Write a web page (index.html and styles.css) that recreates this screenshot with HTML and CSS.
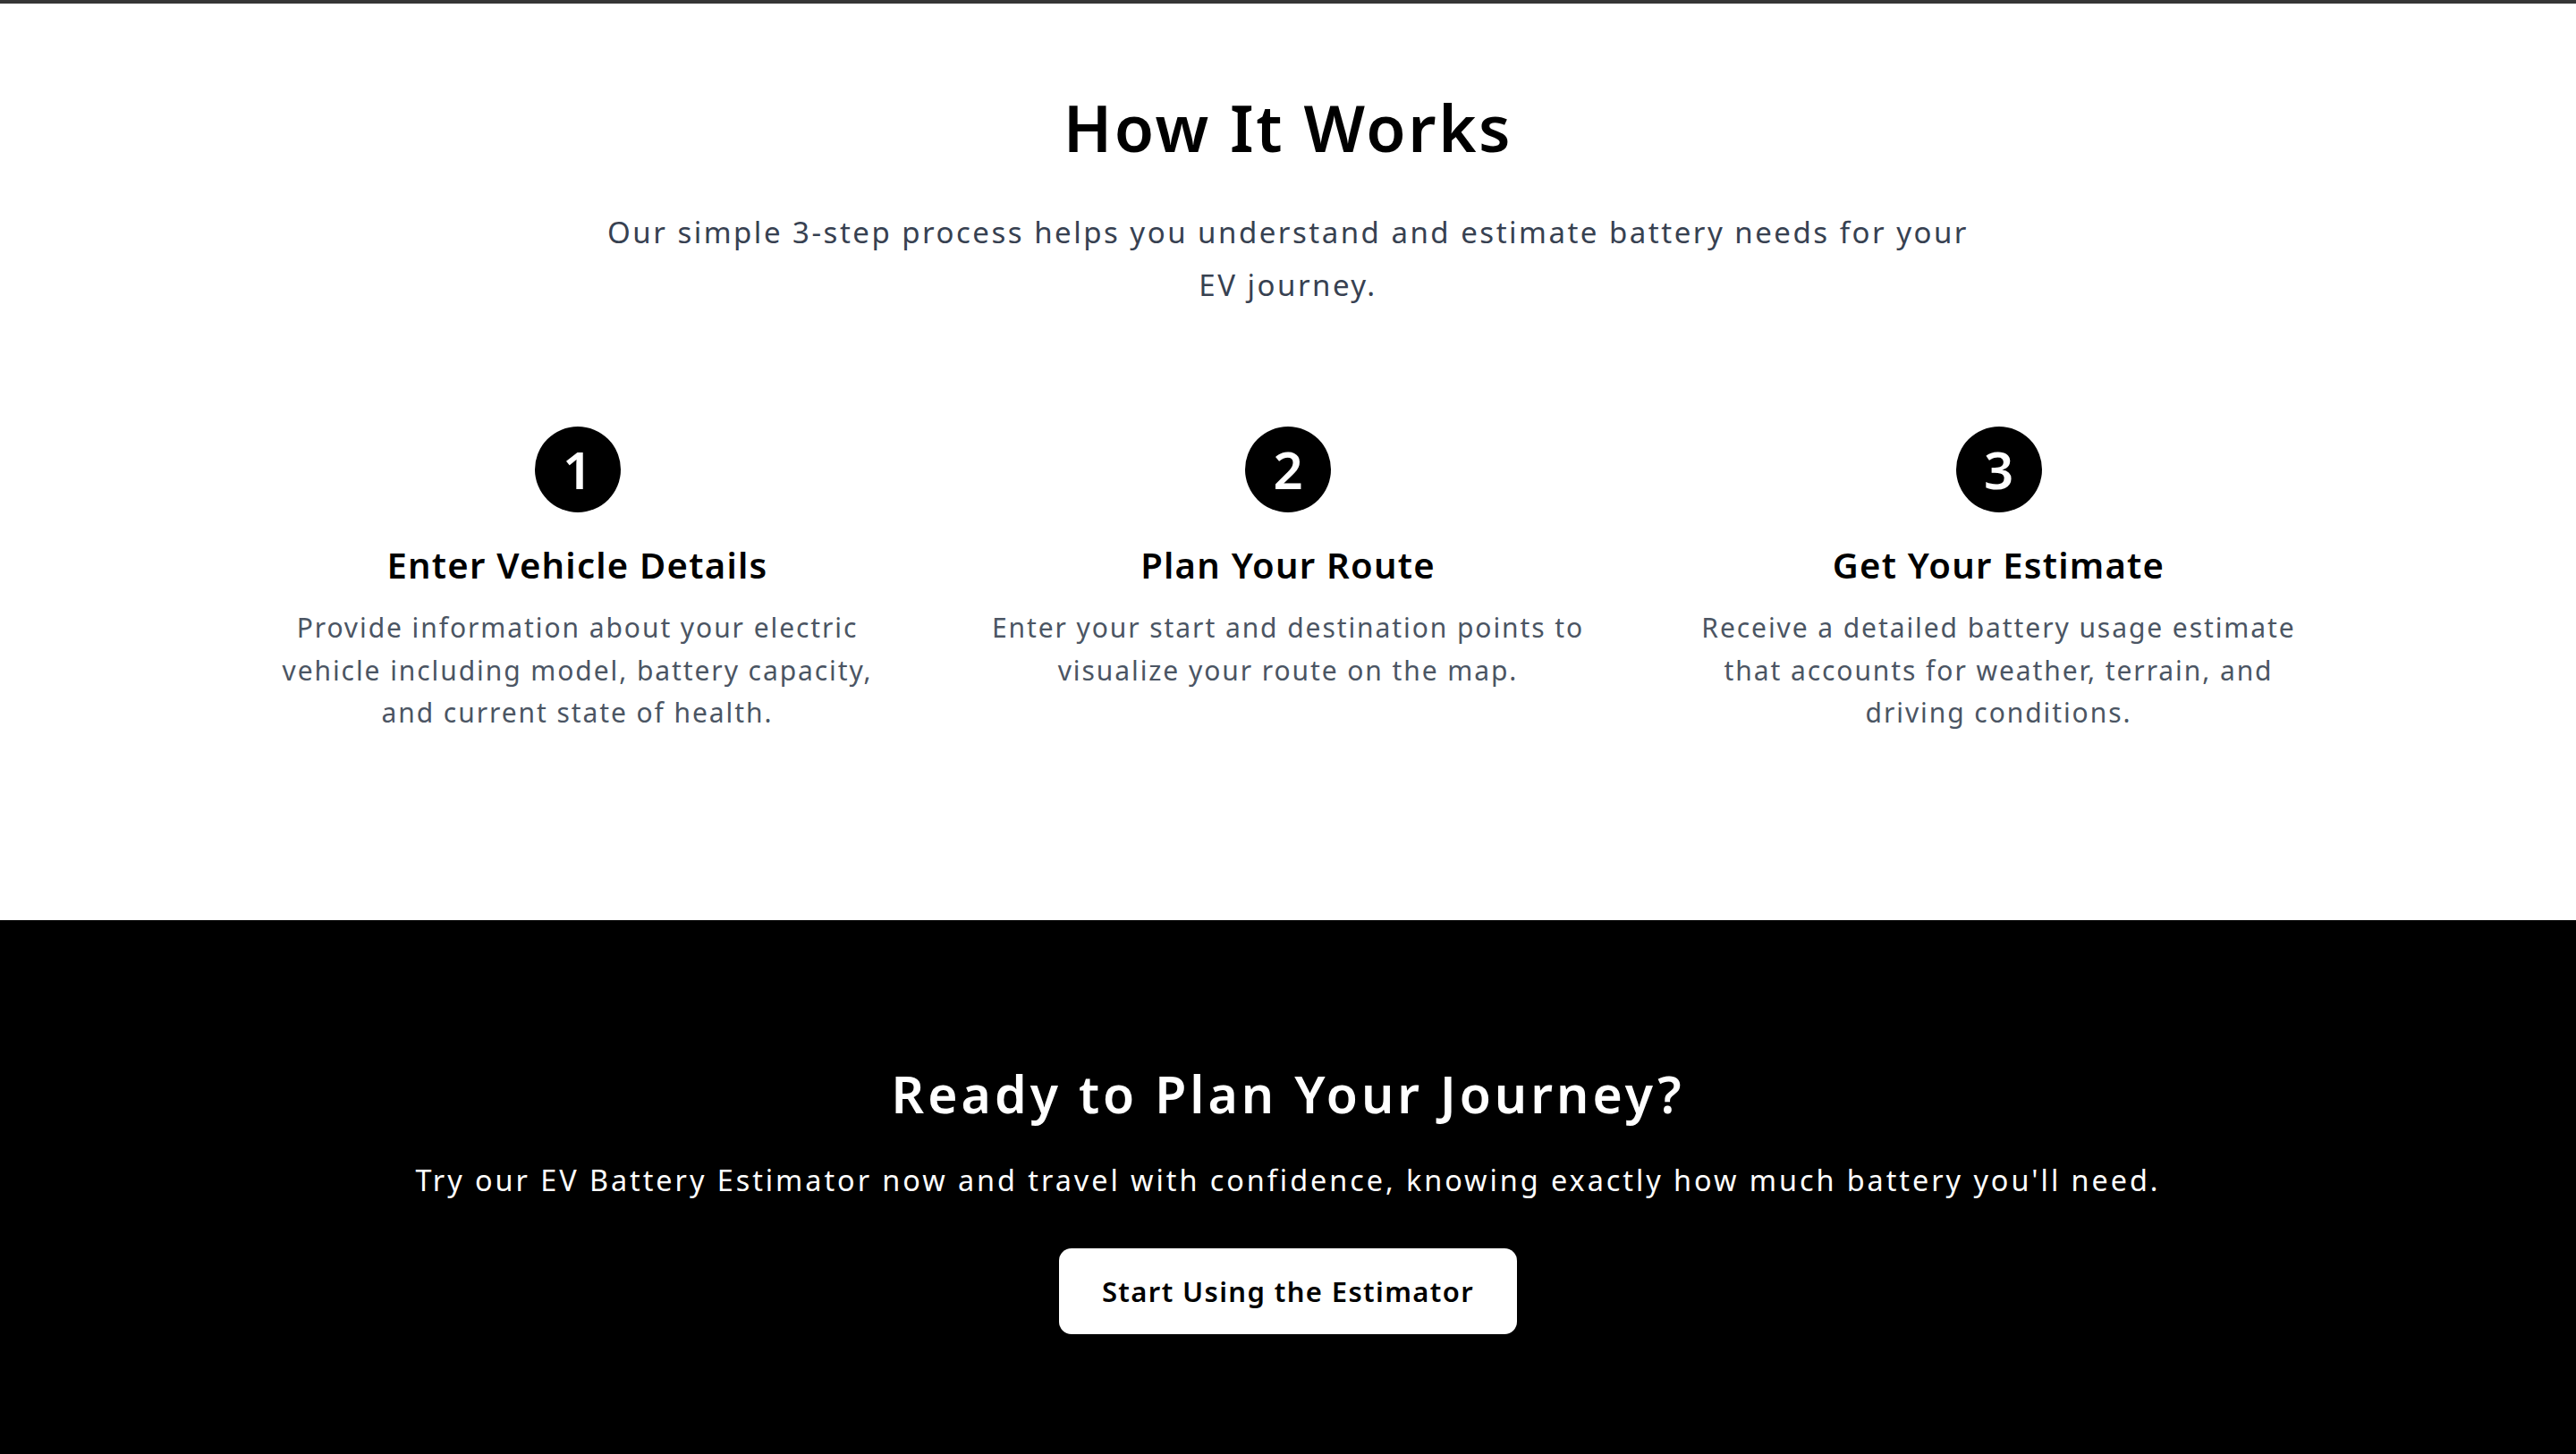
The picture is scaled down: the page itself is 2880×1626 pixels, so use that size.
FILE: index.html
```html
<!DOCTYPE html>
<html lang="en">
<head>
<meta charset="utf-8">
<title>How It Works</title>
<link rel="stylesheet" href="styles.css">
</head>
<body>
<div class="topbar"></div>
<section class="how">
  <h2 class="how-title">How It Works</h2>
  <p class="how-sub">Our simple 3-step process helps you understand and estimate battery needs for your EV journey.</p>
  <div class="steps">
    <div class="step">
      <div class="step-num">1</div>
      <h3 class="step-title">Enter Vehicle Details</h3>
      <p class="step-desc">Provide information about your electric vehicle including model, battery capacity, and current state of health.</p>
    </div>
    <div class="step">
      <div class="step-num">2</div>
      <h3 class="step-title">Plan Your Route</h3>
      <p class="step-desc">Enter your start and destination points to visualize your route on the map.</p>
    </div>
    <div class="step">
      <div class="step-num">3</div>
      <h3 class="step-title">Get Your Estimate</h3>
      <p class="step-desc">Receive a detailed battery usage estimate that accounts for weather, terrain, and driving conditions.</p>
    </div>
  </div>
</section>
<section class="cta">
  <h2 class="cta-title">Ready to Plan Your Journey?</h2>
  <p class="cta-text">Try our EV Battery Estimator now and travel with confidence, knowing exactly how much battery you'll need.</p>
  <a class="cta-btn" href="#">Start Using the Estimator</a>
</section>
</body>
</html>
```
FILE: styles.css
```css
html, body {
  margin: 0;
  padding: 0;
}
body {
  font-family: "Noto Sans", "Open Sans", sans-serif;
  background: #ffffff;
  color: #000000;
}
.topbar {
  height: 4px;
  background: #363636;
}
.how {
  height: 1025px;
  box-sizing: border-box;
  padding-top: 95px;
  display: flex;
  flex-direction: column;
  align-items: center;
}
.how-title {
  margin: 0;
  font-size: 72px;
  line-height: 86px;
  font-weight: 600;
  letter-spacing: 2.6px;
  color: #000;
}
.how-sub {
  margin: 46px 0 0;
  max-width: 1548px;
  text-align: center;
  font-size: 33px;
  line-height: 58.5px;
  letter-spacing: 2.5px;
  color: #374151;
}
.steps {
  margin-top: 129px;
  display: grid;
  grid-template-columns: repeat(3, 700px);
  column-gap: 94.5px;
}
.step {
  display: flex;
  flex-direction: column;
  align-items: center;
  text-align: center;
}
.step-num {
  width: 96px;
  height: 96px;
  border-radius: 50%;
  background: #000;
  color: #fff;
  display: flex;
  align-items: center;
  justify-content: center;
  font-size: 58px;
  font-weight: 600;
  line-height: 1;
}
.step-title {
  margin: 33.5px 0 0;
  font-size: 40px;
  line-height: 50px;
  font-weight: 600;
  letter-spacing: 1.25px;
  color: #000;
}
.step-desc {
  margin: 21.3px 0 0;
  font-size: 30px;
  line-height: 47.8px;
  letter-spacing: 1.92px;
  color: #4b5563;
}
.cta {
  background: #000;
  color: #fff;
  height: 597px;
  box-sizing: border-box;
  padding-top: 160px;
  display: flex;
  flex-direction: column;
  align-items: center;
}
.cta-title {
  margin: 0;
  font-size: 57px;
  line-height: 68px;
  font-weight: 600;
  letter-spacing: 4.05px;
}
.cta-text {
  margin: 38px 0 0;
  font-size: 32.4px;
  line-height: 48px;
  letter-spacing: 2.95px;
}
.cta-btn {
  margin-top: 53px;
  height: 96px;
  box-sizing: border-box;
  padding: 0 48px;
  display: flex;
  align-items: center;
  background: #fff;
  color: #000;
  border-radius: 14px;
  text-decoration: none;
  font-size: 31px;
  font-weight: 600;
  letter-spacing: 1.37px;
}
```
